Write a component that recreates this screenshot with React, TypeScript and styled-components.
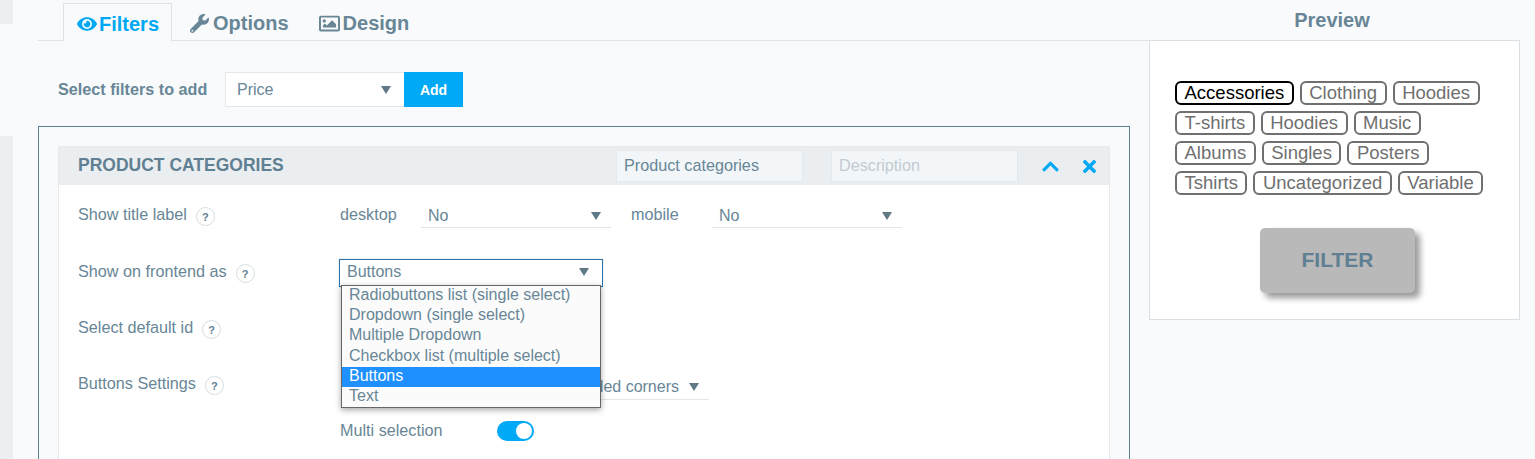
import React from "react";
import styled, { createGlobalStyle } from "styled-components";
import { FaEye, FaWrench, FaRegImage, FaChevronUp, FaTimes } from "react-icons/fa";

const Global = createGlobalStyle`
  html, body { margin: 0; padding: 0; background: #f8fafc; }
  body { font-family: "Liberation Sans", Arial, sans-serif; color: #688696; overflow: hidden; }
  * { box-sizing: border-box; }
`;

const Page = styled.div`
  display: flex;
  height: 459px;
  width: 1535px;
  overflow: hidden;
`;
const Rail = styled.div`
  width: 13px;
  flex: none;
  margin-right: 25px;
  display: flex;
  flex-direction: column;
  gap: 112px;
`;
const RailBlock = styled.div<{ $h?: number }>`
  background: #eceff1;
  ${(p) => (p.$h ? `height: ${p.$h}px; flex: none;` : "flex: 1;")}
`;
const Left = styled.div`
  width: 1111px;
  flex: none;
`;
const Tabs = styled.div`
  display: flex;
  height: 41px;
  padding: 3px 0 0 25px;
  border-bottom: 1px solid #dde3e6;
`;
const Tab = styled.div<{ $active?: boolean; $gap: number }>`
  display: flex;
  align-items: center;
  gap: ${(p) => p.$gap}px;
  height: ${(p) => (p.$active ? "38px" : "37px")};
  padding: 3px ${(p) => (p.$active ? "12px" : "13px")} 0 13px;
  margin-right: ${(p) => (p.$active ? "4px" : "2px")};
  font-size: 20px;
  font-weight: 700;
  color: ${(p) => (p.$active ? "#00a8f3" : "#688696")};
  ${(p) =>
    p.$active
      ? "background:#f8fafc;border:1px solid #dde3e6;border-bottom:none;"
      : "border:1px solid transparent;"}
`;
const Content = styled.div`
  padding: 31px 19px 0 0;
`;
const AddRow = styled.div`
  display: flex;
  align-items: center;
  height: 35px;
  padding-left: 20px;
`;
const AddLabel = styled.span`
  width: 167px;
  font-size: 16.2px;
  font-weight: 700;
`;
const PriceSelect = styled.div`
  width: 179px;
  height: 35px;
  display: flex;
  align-items: center;
  justify-content: space-between;
  padding: 0 13px 0 11px;
  background: #fff;
  border: 1px solid #e3e7ea;
  border-right: none;
  font-size: 16px;
`;
const Arrow = styled.span`
  width: 0;
  height: 0;
  border-left: 5px solid transparent;
  border-right: 5px solid transparent;
  border-top: 8px solid #5f7987;
`;
const AddButton = styled.button`
  width: 59px;
  height: 35px;
  border: 0;
  padding: 0;
  background: #00a9f5;
  color: #fff;
  font: 700 14px "Liberation Sans", Arial, sans-serif;
`;
const Panel = styled.div`
  margin-top: 19px;
  padding: 19px 19px 0;
  height: 340px;
  border: 1px solid #5b7e91;
  border-bottom: none;
`;
const Card = styled.div`
  height: 400px;
  background: #fff;
  border: 1px solid #e6eaed;
`;
const CardHeader = styled.div`
  height: 38px;
  background: #ebeef0;
  display: flex;
  align-items: center;
  padding-left: 19px;
`;
const CardTitle = styled.div`
  width: 538px;
  padding-bottom: 2px;
  font-size: 17.5px;
  font-weight: 700;
  color: #5f7f92;
`;
const HeaderInput = styled.div<{ $muted?: boolean }>`
  width: 187px;
  height: 32px;
  margin-right: 28px;
  padding: 0 7px 1px;
  display: flex;
  align-items: center;
  background: #f2f6f9;
  border: 1px solid #e3e9ec;
  font-size: 16.2px;
  color: ${(p) => (p.$muted ? "#c2cbd1" : "#688696")};
`;
const HeaderIcons = styled.div`
  display: flex;
  align-items: center;
  gap: 20px;
  margin-left: -5px;
  color: #00a8f3;
  font-size: 19px;
`;
const RowList = styled.div`
  padding-top: 21px;
`;
const Row = styled.div<{ $h: number }>`
  height: ${(p) => p.$h}px;
  display: flex;
  align-items: flex-start;
  padding-left: 19px;
  font-size: 16.2px;
`;
const RowLabel = styled.div`
  width: 262px;
  flex: none;
  display: flex;
  align-items: center;
  gap: 9px;
  height: 18px;
  margin-top: -1px;
`;
const Help = styled.span`
  width: 19px;
  height: 19px;
  flex: none;
  border-radius: 50%;
  border: 1px solid #d6dee3;
  background: #fff;
  display: inline-flex;
  align-items: center;
  justify-content: center;
  font-size: 11px;
  font-weight: 700;
  color: #5f7f92;
  margin-top: 5px;
`;
const FieldLabel = styled.span<{ $w: number }>`
  width: ${(p) => p.$w}px;
  flex: none;
  height: 18px;
  line-height: 18px;
  margin-top: -1px;
`;
const LineSelect = styled.div<{ $w: number }>`
  width: ${(p) => p.$w}px;
  height: 28px;
  flex: none;
  display: flex;
  align-items: center;
  justify-content: space-between;
  padding: 4px 10px 0 7px;
  margin-right: 20px;
  margin-top: -6px;
  font-size: 16px;
  border-bottom: 1px solid #e3e7ea;
`;
const OpenSelect = styled.div`
  position: relative;
  width: 264px;
  height: 28px;
  margin: -4px 0 0 -1px;
  display: flex;
  align-items: center;
  justify-content: space-between;
  padding: 0 13px 2px 7px;
  background: #fff;
  border: 1px solid #2e72a8;
  font-size: 16px;
  box-shadow: 0 0 1px #9cc3e0;
`;
const Menu = styled.ul`
  position: absolute;
  left: 1px;
  top: 25px;
  width: 260px;
  margin: 0;
  padding: 0;
  list-style: none;
  background: #fbfbfb;
  border: 1px solid #666;
  box-shadow: 0 2px 6px rgba(0, 0, 0, 0.35);
  z-index: 2;
`;
const MenuItem = styled.li<{ $on?: boolean }>`
  height: 20.2px;
  line-height: 18.5px;
  padding-left: 7px;
  font-size: 16px;
  white-space: nowrap;
  color: ${(p) => (p.$on ? "#fff" : "#688696")};
  background: ${(p) => (p.$on ? "#1e90ff" : "transparent")};
`;
const CornerSelect = styled(LineSelect)`
  justify-content: flex-end;
  gap: 10px;
  padding: 2px 10px 0 0;
  margin-top: -3px;
`;
const Toggle = styled.span`
  width: 37px;
  height: 20px;
  border-radius: 10px;
  background: #00a9f5;
  display: flex;
  align-items: center;
  justify-content: flex-end;
  padding-right: 2px;
  flex: none;
  margin-top: -1px;
`;
const Knob = styled.span`
  width: 16px;
  height: 16px;
  border-radius: 50%;
  background: #fff;
`;
const Side = styled.div`
  width: 371px;
  flex: none;
`;
const PreviewTitle = styled.div`
  height: 40px;
  line-height: 40px;
  text-align: center;
  padding-right: 5px;
  font-size: 20px;
  font-weight: 700;
  color: #688696;
`;
const PreviewBox = styled.div`
  height: 280px;
  background: #fff;
  border: 1px solid #d9e0e4;
  padding: 40px 25px 0;
`;
const Chips = styled.div`
  display: flex;
  flex-wrap: wrap;
  gap: 6px 6px;
  width: 320px;
`;
const Chip = styled.span<{ $on?: boolean }>`
  height: 24px;
  line-height: 19px;
  padding: 0 7.5px;
  border-radius: 6px;
  font-size: 18.5px;
  background: #fff;
  border: 2px solid ${(p) => (p.$on ? "#000" : "#707070")};
  color: ${(p) => (p.$on ? "#000" : "#6f6f6f")};
`;
const FilterButton = styled.div`
  width: 155px;
  height: 65px;
  margin: 33px 0 0 85px;
  padding-bottom: 2px;
  border-radius: 5px;
  background: #b9b9b9;
  box-shadow: 5px 5px 6px rgba(0, 0, 0, 0.4);
  display: flex;
  align-items: center;
  justify-content: center;
  font-size: 21px;
  font-weight: 700;
  color: #5f7f92;
`;

const chips = ["Clothing", "Hoodies", "T-shirts", "Hoodies", "Music", "Albums", "Singles", "Posters", "Tshirts", "Uncategorized", "Variable"];
const options = ["Radiobuttons list (single select)", "Dropdown (single select)", "Multiple Dropdown", "Checkbox list (multiple select)", "Buttons", "Text"];

export default function App() {
  return (
    <Page>
      <Global />
      <Rail>
        <RailBlock $h={24} />
        <RailBlock />
      </Rail>
      <Left>
        <Tabs>
          <Tab $active $gap={2}><FaEye size={20} />Filters</Tab>
          <Tab $gap={4}><FaWrench size={19} />Options</Tab>
          <Tab $gap={3}><FaRegImage size={21} />Design</Tab>
        </Tabs>
        <Content>
          <AddRow>
            <AddLabel>Select filters to add</AddLabel>
            <PriceSelect>Price<Arrow /></PriceSelect>
            <AddButton>Add</AddButton>
          </AddRow>
          <Panel>
            <Card>
              <CardHeader>
                <CardTitle>PRODUCT CATEGORIES</CardTitle>
                <HeaderInput>Product categories</HeaderInput>
                <HeaderInput $muted>Description</HeaderInput>
                <HeaderIcons><FaChevronUp /><FaTimes /></HeaderIcons>
              </CardHeader>
              <RowList>
                <Row $h={57}>
                  <RowLabel>Show title label<Help>?</Help></RowLabel>
                  <FieldLabel $w={81}>desktop</FieldLabel>
                  <LineSelect $w={190}>No<Arrow /></LineSelect>
                  <FieldLabel $w={81}>mobile</FieldLabel>
                  <LineSelect $w={190}>No<Arrow /></LineSelect>
                </Row>
                <Row $h={56}>
                  <RowLabel>Show on frontend as<Help>?</Help></RowLabel>
                  <OpenSelect>
                    Buttons<Arrow />
                    <Menu>
                      {options.map((o) => (
                        <MenuItem key={o} $on={o === "Buttons"}>{o}</MenuItem>
                      ))}
                    </Menu>
                  </OpenSelect>
                </Row>
                <Row $h={56}>
                  <RowLabel>Select default id<Help>?</Help></RowLabel>
                </Row>
                <Row $h={47}>
                  <RowLabel>Buttons Settings<Help>?</Help></RowLabel>
                  <CornerSelect $w={369}>Rounded corners<Arrow /></CornerSelect>
                </Row>
                <Row $h={40}>
                  <RowLabel />
                  <FieldLabel $w={157}>Multi selection</FieldLabel>
                  <Toggle><Knob /></Toggle>
                </Row>
              </RowList>
            </Card>
          </Panel>
        </Content>
      </Left>
      <Side>
        <PreviewTitle>Preview</PreviewTitle>
        <PreviewBox>
          <Chips>
            <Chip $on>Accessories</Chip>
            {chips.map((c, i) => <Chip key={i}>{c}</Chip>)}
          </Chips>
          <FilterButton>FILTER</FilterButton>
        </PreviewBox>
      </Side>
    </Page>
  );
}
